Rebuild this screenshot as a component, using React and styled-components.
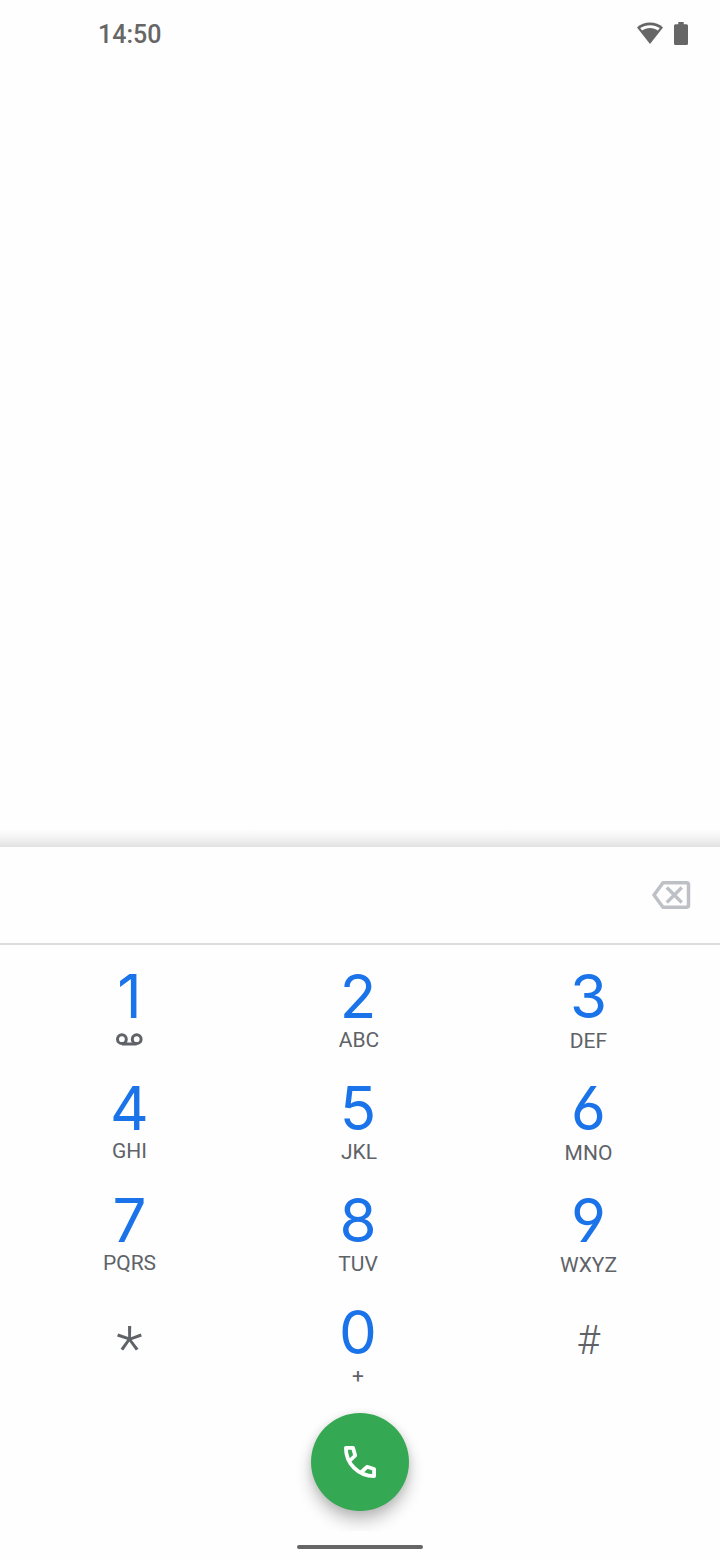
import React, { useState } from 'react';
import styled, { createGlobalStyle } from 'styled-components';

const GlobalStyle = createGlobalStyle`
  * {
    box-sizing: border-box;
  }
  body {
    margin: 0;
    background-color: #fefefe;
    font-family: Roboto, 'Liberation Sans', sans-serif;
  }
`;

const Screen = styled.div`
  width: 720px;
  height: 1560px;
  display: flex;
  flex-direction: column;
  overflow: hidden;
  background-color: #fefefe;
`;

const StatusBar = styled.header`
  height: 67px;
  padding: 0 32px 0 98px;
  display: flex;
  align-items: center;
  justify-content: space-between;
  color: #666;
`;

const Clock = styled.span`
  padding-top: 3px;
  font-size: 25px;
  font-weight: 500;
  line-height: 30px;
`;

const StatusIcons = styled.div`
  display: flex;
  align-items: center;
  gap: 11px;
`;

const CallHistory = styled.main`
  flex: 1;
`;

const PanelShadow = styled.div`
  height: 18px;
  background: linear-gradient(rgba(0, 0, 0, 0), rgba(0, 0, 0, 0.04) 45%, rgba(0, 0, 0, 0.115));
`;

const Dialpad = styled.section`
  height: 713px;
  display: flex;
  flex-direction: column;
  align-items: center;
`;

const NumberBar = styled.div`
  width: 100%;
  height: 98px;
  padding: 0 29px 0 24px;
  display: flex;
  align-items: center;
  border-bottom: 2px solid #dadce0;
`;

const NumberField = styled.div`
  flex: 1;
  font-size: 44px;
  color: #202124;
`;

const IconButton = styled.button`
  display: flex;
  padding: 0;
  border: none;
  background: none;
`;

const Keys = styled.div`
  width: 100%;
  height: 448px;
  padding: 0 15px;
  display: grid;
  grid-template-columns: 229px 228px 233px;
  grid-template-rows: repeat(4, 112px);
`;

const Key = styled.button`
  padding: 21px 0 0;
  display: flex;
  flex-direction: column;
  align-items: center;
  border: none;
  background: none;
  font-family: inherit;
`;

const Digit = styled.span`
  height: 60px;
  line-height: 60px;
  font-family: Inter, 'Open Sans', sans-serif;
  font-size: 60px;
  font-feature-settings: 'cv03', 'cv04';
  color: #1a73e8;
`;

const Letters = styled.span`
  height: 24px;
  margin-top: ${(props) => props.$top}px;
  padding-left: ${(props) => props.$left || 0}px;
  line-height: 24px;
  font-size: 21px;
  color: #5f6368;
`;

const Voicemail = styled.svg`
  margin-top: 7px;
`;

const Symbol = styled.span`
  height: 60px;
  margin-top: ${(props) => props.$top}px;
  line-height: 60px;
  font-size: ${(props) => props.$size}px;
  font-weight: ${(props) => props.$weight};
  color: #5f6368;
`;

const CallArea = styled.div`
  height: 138px;
  padding-top: 20px;
  width: 180px;
  display: flex;
  justify-content: center;
  overflow: hidden;
`;

const CallButton = styled.button`
  width: 98px;
  height: 98px;
  padding: 0;
  display: flex;
  align-items: center;
  justify-content: center;
  border: none;
  border-radius: 50%;
  background-color: #34a853;
  box-shadow: 0 10px 16px rgba(0, 0, 0, 0.24), 0 1px 8px rgba(0, 0, 0, 0.1);
`;

const HomeIndicator = styled.div`
  width: 126px;
  height: 4px;
  margin-top: 14px;
  border-radius: 2px;
  background-color: #666;
`;

const KEYS = [
  { digit: '1' },
  { digit: '2', letters: 'ABC', top: 2, left: 2 },
  { digit: '3', letters: 'DEF', top: 3 },
  { digit: '4', letters: 'GHI', top: 1 },
  { digit: '5', letters: 'JKL', top: 2, left: 2 },
  { digit: '6', letters: 'MNO', top: 3 },
  { digit: '7', letters: 'PQRS', top: 1 },
  { digit: '8', letters: 'TUV', top: 2 },
  { digit: '9', letters: 'WXYZ', top: 3 },
  { symbol: '*', size: 62, weight: 300, top: 17 },
  { digit: '0', letters: '+', top: 2 },
  { symbol: '#', size: 40, weight: 300, top: 9 },
];

function App() {
  const [number, setNumber] = useState('');

  return (
    <Screen>
      <GlobalStyle />
      <StatusBar>
        <Clock>14:50</Clock>
        <StatusIcons>
          <svg width='26' height='23' viewBox='0 0 26 23' fill='#666'>
            <path d='M13 0.5C8 .5 3.4 2.4 0 5.4L13 22 26 5.4C22.600 2.4 18 .5 13 .5Z' />
            <path
              d='M3.200 6.100C6 4.200 9.300 3.200 13 3.200s7 1 9.800 2.900l-1.900 2.500C18.600 6.800 16 5.900 13 5.900s-5.600.9-7.900 2.700Z'
              fill='#fefefe'
            />
          </svg>
          <svg width='14' height='23' viewBox='0 0 14 23' fill='#666'>
            <path d='M4.300 0H9.700V2.300H12.500Q14 2.300 14 3.800V21.500Q14 23 12.500 23H1.500Q0 23 0 21.500V3.800Q0 2.300 1.500 2.300H4.300Z' />
          </svg>
        </StatusIcons>
      </StatusBar>
      <CallHistory />
      <PanelShadow />
      <Dialpad>
        <NumberBar>
          <NumberField>{number}</NumberField>
          <IconButton aria-label='backspace' onClick={() => setNumber(number.slice(0, -1))}>
            <svg width='39' height='28' viewBox='0 0 39 28' fill='none' stroke='#bdc1c6' strokeWidth='3.500'>
              <path
                d='M11 1.750H34.500Q36.500 1.750 36.500 3.750V24.250Q36.500 26.250 34.500 26.250H11L2 14Z'
                strokeLinejoin='round'
              />
              <path d='M14.800 6.500 29.800 21.500M29.800 6.500 14.800 21.500' strokeWidth='3.300' />
            </svg>
          </IconButton>
        </NumberBar>
        <Keys>
          {KEYS.map(({ digit, letters, top, left, symbol, size, weight }) => (
            <Key key={digit || symbol} onClick={() => setNumber(number + (digit || symbol))}>
              {digit && <Digit>{digit}</Digit>}
              {letters && (
                <Letters $top={top} $left={left}>
                  {letters}
                </Letters>
              )}
              {digit === '1' && (
                <Voicemail width='27' height='13' viewBox='0 0 27 13' fill='none' stroke='#5f6368' strokeWidth='3'>
                  <circle cx='5.900' cy='6.200' r='4.400' />
                  <circle cx='20.700' cy='6.200' r='4.400' />
                  <path d='M5.900 11H20.700' />
                </Voicemail>
              )}
              {symbol && (
                <Symbol $top={top} $size={size} $weight={weight}>
                  {symbol}
                </Symbol>
              )}
            </Key>
          ))}
        </Keys>
        <CallArea>
          <CallButton aria-label='call'>
            <svg width='32' height='32' viewBox='0 0 32 32' fill='none' stroke='#fff' strokeWidth='3.800'>
              <path
                d='M6 14.500 11.200 9.500 9 1.900H1.900C1.900 17.500 14.500 30.100 30.100 30.100V23L23 20.800 17.500 26'
                strokeLinejoin='round'
              />
            </svg>
          </CallButton>
        </CallArea>
        <HomeIndicator />
      </Dialpad>
    </Screen>
  );
}

export default App;
